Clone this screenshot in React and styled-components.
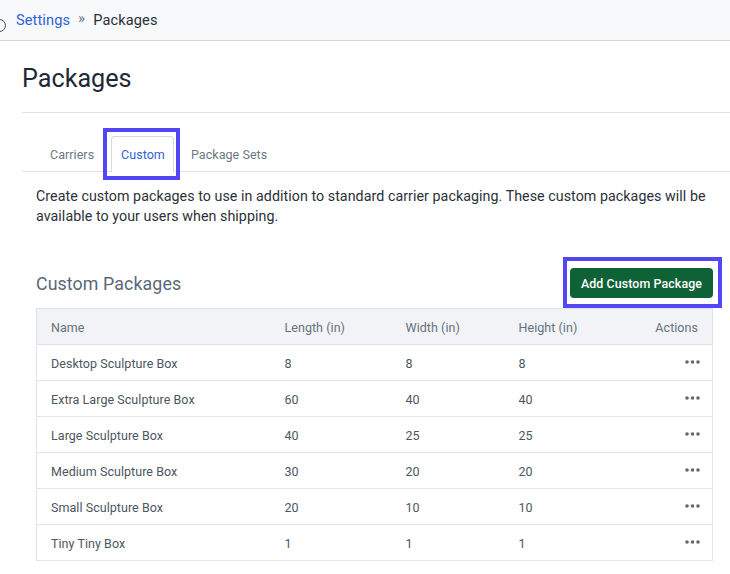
import React from "react";
import styled, { createGlobalStyle } from "styled-components";

const Global = createGlobalStyle`
  html, body { margin: 0; padding: 0; background: #fff; }
  body { font-family: Roboto, "Liberation Sans", sans-serif; color: #212934; overflow: hidden; }
  #root { width: 730px; height: 574px; overflow: hidden; }
`;

const TopBar = styled.header`
  position: relative;
  height: 40px;
  box-sizing: content-box;
  background: #f8f9fb;
  border-bottom: 1.5px solid #d5d9df;
  display: flex;
  align-items: center;
  padding-left: 16px;
  font-size: 14.6px;
  letter-spacing: 0.1px;
`;
const ClippedCircle = styled.span`
  position: absolute;
  left: -7px;
  top: 19px;
  width: 11px;
  height: 11px;
  border: 1px solid #444b55;
  border-radius: 50%;
`;
const Crumb = styled.a`
  color: #2f62d9;
`;
const Sep = styled.span`
  color: #6b7683;
  margin: -4px 8px 0 8px;
  font-size: 15px;
`;
const Current = styled.span`
  color: #2b3138;
`;
const Main = styled.main`
  padding: 0 0 0 22px;
`;
const Title = styled.h1`
  margin: 0;
  padding-top: 21px;
  height: 50px;
  line-height: 34px;
  font-size: 25.2px;
  font-weight: 400;
  color: #212934;
  border-bottom: 1px solid #dfe3e8;
`;
const Tabs = styled.nav`
  display: flex;
  align-items: stretch;
  margin-top: 23px;
  height: 35px;
  padding-left: 14px;
  border-bottom: 1px solid #dfe3e8;
`;
const Tab = styled.a`
  position: relative;
  display: flex;
  align-items: center;
  box-sizing: border-box;
  width: ${p => p.$w}px;
  height: 36px;
  padding-left: ${p => p.$pad}px;
  font-size: 12.5px;
  letter-spacing: 0.05px;
  color: ${p => (p.$active ? "#2f62d9" : "#6c7885")};
  ${p => p.$active && `
    background: #fff;
    border: 1px solid #d5d9e0;
    border-bottom: 0;
    border-radius: 4px 4px 0 0;
    &::after {
      content: "";
      position: absolute;
      left: -9px; top: -9px; right: -7px; bottom: -8px;
      border: 4px solid #5347f5;
    }
  `}
`;
const Body = styled.section`
  padding: 0 17px 0 14px;
`;
const Intro = styled.p`
  margin: 14px 0 0;
  font-size: 14.25px;
  line-height: 20px;
  color: #2b3138;
  letter-spacing: 0.05px;
`;
const SectionHead = styled.div`
  display: flex;
  align-items: center;
  justify-content: space-between;
  margin-top: 42px;
  height: 30px;
`;
const SectionTitle = styled.h2`
  margin: 0;
  font-size: 17.8px;
  font-weight: 400;
  color: #5a6978;
  letter-spacing: 0.1px;
`;
const AddButton = styled.button`
  position: relative;
  width: 143px;
  height: 30px;
  border: 0;
  border-radius: 4px;
  background: #0f6236;
  color: #fff;
  font: 500 12.4px Roboto, "Liberation Sans", sans-serif;
  letter-spacing: 0.1px;
  padding: 0;
  &::after {
    content: "";
    position: absolute;
    left: -7px; top: -11px; right: -9px; bottom: -10px;
    border: 4px solid #5347f5;
  }
`;
const Table = styled.table`
  width: 677px;
  margin-top: 10px;
  border-collapse: collapse;
  table-layout: fixed;
  font-size: 12.5px;
  letter-spacing: 0.05px;
`;
const Th = styled.th`
  height: 36px;
  padding: 1px 0 0 ${p => p.$pad || 0}px;
  box-sizing: border-box;
  text-align: ${p => p.$right ? "right" : "left"};
  font-weight: 400;
  color: #66727f;
  background: #f1f3f6;
  border-top: 1px solid #dfe3e9;
  border-bottom: 1px solid #dfe3e9;
  ${p => p.$first && "border-left: 1px solid #dfe3e9;"}
  ${p => p.$right && "border-right: 1px solid #dfe3e9; padding-right: 14px;"}
`;
const Td = styled.td`
  height: 36px;
  padding: 1px 0 0 ${p => p.$pad || 0}px;
  box-sizing: border-box;
  color: #4b5662;
  border-bottom: 1px solid #e1e5ea;
  ${p => p.$first && "border-left: 1px solid #e1e5ea;"}
  ${p => p.$right && "border-right: 1px solid #e1e5ea; text-align: right; padding-right: 12px;"}
`;
const More = styled.svg`
  display: block;
  margin: -3px 0 0 auto;
  width: 15px;
  height: 4px;
  fill: #5e6a77;
`;

const rows = [
  ["Desktop Sculpture Box", 8, 8, 8],
  ["Extra Large Sculpture Box", 60, 40, 40],
  ["Large Sculpture Box", 40, 25, 25],
  ["Medium Sculpture Box", 30, 20, 20],
  ["Small Sculpture Box", 20, 10, 10],
  ["Tiny Tiny Box", 1, 1, 1],
];

export default function App() {
  return (
    <>
      <Global />
      <TopBar>
        <ClippedCircle />
        <Crumb>Settings</Crumb>
        <Sep>»</Sep>
        <Current>Packages</Current>
      </TopBar>
      <Main>
        <Title>Packages</Title>
        <Tabs>
          <Tab $w={75} $pad={14}>Carriers</Tab>
          <Tab $w={63} $pad={9} $active>Custom</Tab>
          <Tab $w={110} $pad={17}>Package Sets</Tab>
        </Tabs>
        <Body>
          <Intro>
            Create custom packages to use in addition to standard carrier packaging. These custom packages will be
            available to your users when shipping.
          </Intro>
          <SectionHead>
            <SectionTitle>Custom Packages</SectionTitle>
            <AddButton>Add Custom Package</AddButton>
          </SectionHead>
          <Table>
            <colgroup>
              <col style={{ width: 248 }} />
              <col style={{ width: 121 }} />
              <col style={{ width: 113 }} />
              <col style={{ width: 107 }} />
              <col />
            </colgroup>
            <thead>
              <tr>
                <Th $first $pad={14}>Name</Th>
                <Th>Length (in)</Th>
                <Th>Width (in)</Th>
                <Th>Height (in)</Th>
                <Th $right>Actions</Th>
              </tr>
            </thead>
            <tbody>
              {rows.map(r => (
                <tr key={r[0]}>
                  <Td $first $pad={14}>{r[0]}</Td>
                  <Td>{r[1]}</Td>
                  <Td>{r[2]}</Td>
                  <Td>{r[3]}</Td>
                  <Td $right>
                    <More viewBox="0 0 15 4">
                      <circle cx="2" cy="2" r="1.8" />
                      <circle cx="7.5" cy="2" r="1.8" />
                      <circle cx="13" cy="2" r="1.8" />
                    </More>
                  </Td>
                </tr>
              ))}
            </tbody>
          </Table>
        </Body>
      </Main>
    </>
  );
}
